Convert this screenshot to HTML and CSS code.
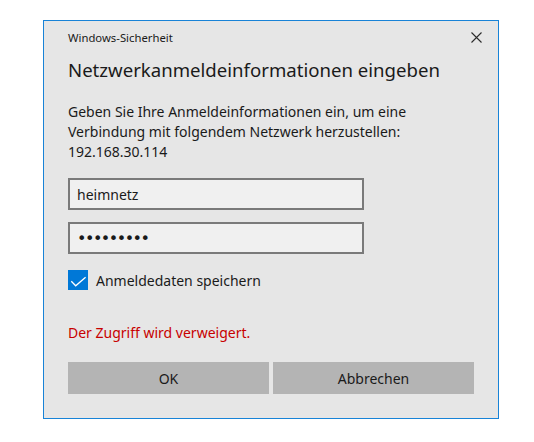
FILE: index.html
```html
<!DOCTYPE html>
<html lang="de">
<head>
  <meta charset="UTF-8">
  <meta name="viewport" content="width=device-width, initial-scale=1.0">
  <title>Windows-Sicherheit</title>
  <link rel="stylesheet" href="styles.css">
</head>
<body>

<div class="dialog">
  <div class="titlebar">
    <span class="caption">Windows-Sicherheit</span>
    <button class="close" aria-label="Schließen">
      <svg width="11" height="11" viewBox="0 0 11 11">
        <path d="M0.5 0.5 L10.5 10.5 M10.5 0.5 L0.5 10.5" stroke="#2b2b2b" stroke-width="1.1" fill="none"/>
      </svg>
    </button>
  </div>

  <h1 class="heading">Netzwerkanmeldeinformationen eingeben</h1>

  <p class="message">
    Geben Sie Ihre Anmeldeinformationen ein, um eine<br>
    Verbindung mit folgendem Netzwerk herzustellen:<br>
    192.168.30.114
  </p>

  <input class="field" type="text" value="heimnetz">
  <input class="field secret" type="password" value="geheim123">

  <label class="remember">
    <span class="checkbox">
      <svg width="20" height="20" viewBox="0 0 20 20">
        <path d="M3.3 11.2 L7.7 15.8 L17.6 7.2" stroke="#fff" stroke-width="1.3" fill="none"/>
      </svg>
    </span>
    Anmeldedaten speichern
  </label>

  <p class="error">Der Zugriff wird verweigert.</p>

  <div class="actions">
    <button class="btn">OK</button>
    <button class="btn">Abbrechen</button>
  </div>
</div>

</body>
</html>
```

FILE: styles.css
```css
* {
  margin: 0;
  padding: 0;
  box-sizing: border-box;
}
body {
  font-family: "Noto Sans", "Open Sans", Arial, sans-serif;
  background-color: #fff;
  padding: 20px 0 0 43px;
  color: #1a1a1a;
}
.dialog {
  width: 456px;
  height: 399px;
  background-color: #e6e6e6;
  border: 1px solid #1883d7;
  padding: 0 24px 24px 24px;
  display: flex;
  flex-direction: column;
}
.titlebar {
  display: flex;
  align-items: center;
  justify-content: space-between;
  height: 32px;
}
.caption {
  font-size: 11.3px;
}
.close {
  background: none;
  border: none;
  width: 32px;
  height: 32px;
  margin-right: -18px;
  display: flex;
  align-items: center;
  justify-content: center;
}
.heading {
  font-size: 18.6px;
  font-weight: normal;
  line-height: 26px;
  margin-top: 4px;
}
.message {
  font-size: 14px;
  line-height: 20px;
  margin-top: 19px;
}
.field {
  width: 296px;
  height: 32px;
  border: 2px solid #7a7a7a;
  background-color: #f0f0f0;
  font-family: inherit;
  font-size: 14px;
  color: #1a1a1a;
  padding: 0 7px;
  outline: none;
}
.field:first-of-type {
  margin-top: 16px;
}
.field + .field {
  margin-top: 12px;
}
.secret {
  font-family: "DejaVu Sans", sans-serif;
  font-size: 16px;
  letter-spacing: -1.5px;
}
.remember {
  display: flex;
  align-items: center;
  gap: 8px;
  font-size: 14px;
  margin-top: 16px;
}
.checkbox {
  width: 20px;
  height: 20px;
  background-color: #0078d7;
  display: flex;
}
.error {
  font-size: 14px;
  color: #c80000;
  margin-top: 33px;
}
.actions {
  margin-top: auto;
  display: grid;
  grid-template-columns: 1fr 1fr;
  gap: 4px;
}
.btn {
  height: 32px;
  background-color: #b4b4b4;
  border: none;
  font-family: inherit;
  font-size: 14px;
  color: #1a1a1a;
}
```
